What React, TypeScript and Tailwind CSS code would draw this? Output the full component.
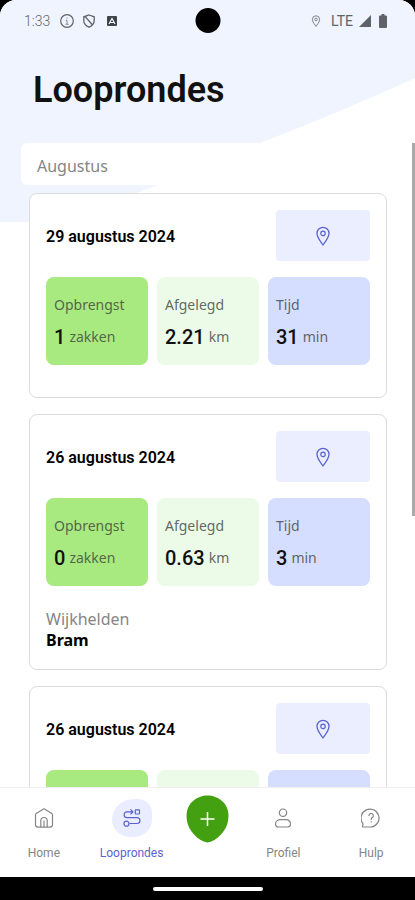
import React from 'react'
import clsx from 'clsx'

type Round = {
  id: number
  date: string
  bags?: string
  distance?: string
  minutes?: string
  helpers?: string
}

const rounds: Round[] = [
  { id: 1, date: '29 augustus 2024', bags: '1', distance: '2.21', minutes: '31' },
  { id: 2, date: '26 augustus 2024', bags: '0', distance: '0.63', minutes: '3', helpers: 'Bram' },
  { id: 3, date: '26 augustus 2024' },
]

const PinIcon: React.FC<{ className?: string }> = ({ className }) => (
  <svg viewBox="0 0 16 20" fill="none" stroke="currentColor" className={className} aria-hidden="true">
    <path
      d="M8 19C6.8 16.8 2 12.1 2 7.3a6 6 0 0 1 12 0C14 12.1 9.2 16.8 8 19Z"
      strokeWidth="1.3"
      strokeLinejoin="round"
    />
    <circle cx="8" cy="7.4" r="2.2" strokeWidth="1.2" />
  </svg>
)

const HomeIcon: React.FC = () => (
  <svg width="20" height="20" viewBox="0 0 20 20" fill="none" stroke="currentColor" strokeWidth="1.2" strokeLinejoin="round" aria-hidden="true">
    <path d="M1.5 7.2c0-.8.3-1.4 1-1.9L10 .8l7.5 4.5c.7.5 1 1.1 1 1.9v9.300a2.700 2.700 0 0 1-2.700 2.700H4.200a2.700 2.700 0 0 1-2.700-2.700Z" />
    <path d="M6.800 19v-6.300a3.200 3.200 0 0 1 6.400 0V19M10 12.500V19" />
  </svg>
)

const RouteIcon: React.FC = () => (
  <svg width="18" height="20" viewBox="0 0 18 20" fill="none" stroke="currentColor" strokeWidth="1.2" strokeLinejoin="round" aria-hidden="true">
    <circle cx="3.5" cy="15.700" r="2.500" />
    <rect x="12.300" y="1.800" width="4.200" height="4.200" rx="0.5" />
    <path d="M9.500 3.800H4A2.900 2.900 0 0 0 4 9.600h10a2.900 2.900 0 0 1 0 5.900H6.500M7.500 1.300 10 3.800 7.500 6.200" />
  </svg>
)

const ProfileIcon: React.FC = () => (
  <svg width="18" height="20" viewBox="0 0 18 20" fill="none" stroke="currentColor" strokeWidth="1.2" aria-hidden="true">
    <circle cx="9" cy="4.700" r="3.700" />
    <path d="M6.500 11.700h5c3 0 5 1.800 5 4.300 0 1.900-1.200 3-2.800 3H4.300c-1.600 0-2.800-1.100-2.800-3 0-2.500 2-4.300 5-4.300Z" />
  </svg>
)

const HelpIcon: React.FC = () => (
  <svg width="20" height="20" viewBox="0 0 20 20" fill="none" stroke="currentColor" strokeWidth="1.200" strokeLinecap="round" strokeLinejoin="round" aria-hidden="true">
    <path d="M2.200 19c-.7 0-.9-.5-.7-1.100.3-1 .7-1.500.4-2.300A9 9 0 1 1 10.200 19Z" />
    <path d="M7.900 7.500a2.200 2.200 0 1 1 3.500 1.900c-.8.600-1.200.8-1.200 2M10.200 13.700v.3" />
  </svg>
)

const StatusBar: React.FC = () => (
  <div className="relative flex h-[42px] items-center justify-between pl-6 pr-7 text-[#5f6368]">
    <div className="flex items-center gap-2">
      <span className="text-sm font-light">1:33</span>
      <svg width="14" height="14" viewBox="0 0 14 14" fill="none" stroke="currentColor" className="ml-0.5" aria-hidden="true">
        <circle cx="7" cy="7" r="6.3" strokeWidth="1.2" />
        <path d="M7 3.5v1.200M5.800 6.300H7v4M5.500 10.300h3" strokeOpacity="0.7" />
      </svg>
      <svg width="14" height="14" viewBox="0 0 14 14" fill="none" stroke="currentColor" strokeWidth="1.3" aria-hidden="true">
        <path d="M7 1l5.200 1.800v3.700c0 3-2.200 5.400-5.200 6.700-3-1.300-5.200-3.700-5.200-6.700V2.800ZM3 2.300l7.500 8.700" />
      </svg>
      <svg width="14" height="14" viewBox="0 0 14 14" className="ml-0.5" aria-hidden="true">
        <rect x="1" y="2" width="10" height="10" rx="1" fill="#3f4347" />
        <path d="M3 10 6 4.500 9 10M4 8.500h4" fill="none" stroke="#f1f5fe" strokeWidth="1.2" />
      </svg>
    </div>
    <div className="absolute left-1/2 top-2 size-[25px] -translate-x-1/2 rounded-full bg-black" />
    <div className="flex items-center gap-1.5">
      <PinIcon className="mr-1 h-3 w-2.5" />
      <span className="text-sm">LTE</span>
      <svg width="12" height="12" viewBox="0 0 12 12" fill="currentColor" aria-hidden="true">
        <path d="M12 0v12H0Z" />
      </svg>
      <svg width="8" height="14" viewBox="0 0 8 14" fill="currentColor" className="ml-0.5" aria-hidden="true">
        <path d="M2.500 0h3v1.500H7a1 1 0 0 1 1 1V13a1 1 0 0 1-1 1H1a1 1 0 0 1-1-1V2.500a1 1 0 0 1 1-1h1.500Z" />
      </svg>
    </div>
  </div>
)

const StatTile: React.FC<{ label: string; value?: string; unit: string; className: string }> = ({
  label,
  value,
  unit,
  className,
}) => (
  <div className={clsx('h-[88px] rounded-lg px-2 pt-4', className)}>
    {value && (
      <>
        <div className="font-['Noto_Sans',sans-serif] text-sm leading-6 text-[#3c423c]/80">{label}</div>
        <div className="mt-1 flex items-center gap-1">
          <span className="text-xl leading-8 font-medium text-[#111]">{value}</span>
          <span className="font-['Noto_Sans',sans-serif] text-sm leading-8 text-[#3c423c]/80">{unit}</span>
        </div>
      </>
    )}
  </div>
)

const RoundCard: React.FC<{ round: Round }> = ({ round }) => (
  <article className="rounded-lg border border-[#dcdcdc] bg-white p-4">
    <div className="flex items-center justify-between">
      <h2 className="pt-0.5 text-base font-semibold text-black">{round.date}</h2>
      <button
        type="button"
        aria-label="Kaart"
        className="flex h-[51px] w-[94px] items-center justify-center rounded bg-[#ebeeff] text-[#5a63cf]"
      >
        <PinIcon className="h-5 w-4" />
      </button>
    </div>
    <div className="mt-4 grid grid-cols-3 gap-[9px]">
      <StatTile label="Opbrengst" value={round.bags} unit="zakken" className="bg-[#a8ea7f]" />
      <StatTile label="Afgelegd" value={round.distance} unit="km" className="bg-[#ecfbe8]" />
      <StatTile label="Tijd" value={round.minutes} unit="min" className="bg-[#d6deff]" />
    </div>
    <div className="mt-4">
      {round.helpers && (
        <div className="pt-1.5 pb-[3px]">
          <div className="font-['Noto_Sans',sans-serif] text-base leading-[22px] text-[#858585]">Wijkhelden</div>
          <div className="font-['Noto_Sans',sans-serif] text-base leading-5 font-bold text-black">{round.helpers}</div>
        </div>
      )}
    </div>
  </article>
)

const NavItem: React.FC<{ label: string; active?: boolean; children: React.ReactNode }> = ({
  label,
  active,
  children,
}) => (
  <a
    href="#"
    className={clsx('flex flex-1 flex-col items-center pt-[11px]', active ? 'text-[#5a63cf]' : 'text-[#858585]')}
  >
    <span
      className={clsx(
        'flex h-[38px] w-10 items-center justify-center',
        active && 'rounded-[60%_40%_50%_50%] bg-[#e9edff]'
      )}
    >
      {children}
    </span>
    <span className="mt-2 text-xs leading-4">{label}</span>
  </a>
)

const BottomNav: React.FC = () => (
  <nav className="relative flex h-[90px] shrink-0 border-t border-[#efefef] bg-white">
    <NavItem label="Home">
      <HomeIcon />
    </NavItem>
    <NavItem label="Looprondes" active>
      <RouteIcon />
    </NavItem>
    <div className="flex w-16 justify-center pt-[7px]">
      <button type="button" aria-label="Nieuwe ronde" className="h-12 w-[43px]">
        <svg width="43" height="48" viewBox="0 0 43 48" fill="none" aria-hidden="true">
          <path
            d="M21.500.5C32 .5 42.500 8 42.500 21c0 12-8 21-16.500 25.300-3 1.500-6 1.500-9 0C8.500 42 .5 33 .5 21 .5 8 11 .5 21.500.5Z"
            fill="#43a010"
          />
          <path d="M14.500 24h14M21.500 17v14" stroke="#fff" strokeWidth="1.5" />
        </svg>
      </button>
    </div>
    <NavItem label="Profiel">
      <ProfileIcon />
    </NavItem>
    <NavItem label="Hulp">
      <HelpIcon />
    </NavItem>
  </nav>
)

const App: React.FC = () => {
  return (
    <div className="flex h-screen flex-col bg-black font-[Roboto,sans-serif]">
      <div className="relative isolate flex min-h-0 flex-1 flex-col overflow-hidden rounded-t-2xl bg-white">
        <svg
          viewBox="0 0 415 222"
          preserveAspectRatio="none"
          className="absolute inset-x-0 top-0 -z-10 h-[222px] w-full"
          aria-hidden="true"
        >
          <path d="M0 0h415v78Q350 108 260 143L155 186 60 222H0Z" fill="#f0f4fe" />
        </svg>
        <StatusBar />
        <h1 className="px-[33px] pt-6 pb-7 text-[36px] leading-[49px] font-semibold text-[#111]">Looprondes</h1>
        <main className="relative min-h-0 flex-1 overflow-y-auto pl-[21px] [scrollbar-width:none]">
          <h3 className="rounded-l-md bg-white px-4 pt-1 font-['Noto_Sans',sans-serif] text-base leading-[38px] text-[#858585]">
            Augustus
          </h3>
          <div className="flex flex-col gap-4 pt-2 pr-7 pb-4 pl-2">
            {rounds.map((round) => (
              <RoundCard key={round.id} round={round} />
            ))}
          </div>
          <div className="absolute top-0 right-0 h-[373px] w-[3px] bg-[#a9a9a9]" />
        </main>
        <BottomNav />
      </div>
      <div className="flex h-[23px] shrink-0 items-center justify-center">
        <div className="h-1 w-[110px] rounded-full bg-white" />
      </div>
    </div>
  )
}

export default App
